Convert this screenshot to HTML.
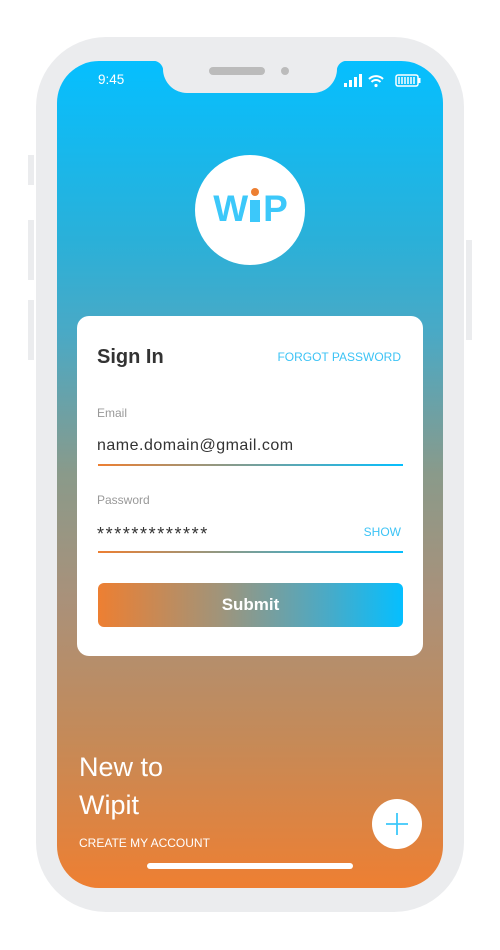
<!DOCTYPE html>
<html><head><meta charset="utf-8"><style>
*{margin:0;padding:0;box-sizing:border-box}
body{width:500px;height:950px;background:#fff;position:relative;overflow:hidden;font-family:"Liberation Sans",sans-serif}
.frame{position:absolute;left:36px;top:37px;width:428px;height:875px;background:#ebecee;border-radius:70px}
.btn{position:absolute;background:#ebecee}
.screen{position:absolute;left:57px;top:61px;width:386px;height:827px;border-radius:42px;overflow:hidden;
background:linear-gradient(180deg,#05bfff 0%,#2bb0d8 22%,#4aa9c5 33%,#8a9a8a 50%,#a9917a 65%,#c58a58 82%,#ee7f32 100%)}
.notch{position:absolute;left:106px;top:0;width:174px;height:32px;background:#ebecee;border-radius:0 0 24px 24px}
.notch:before,.notch:after{content:"";position:absolute;left:-10px;top:0;width:10px;height:10px;background:radial-gradient(circle at 0 100%,transparent 10px,#ebecee 10.5px)}
.notch:after{left:auto;right:-10px;background:radial-gradient(circle at 100% 100%,transparent 10px,#ebecee 10.5px)}
.card{position:absolute;left:20px;top:255px;width:346px;height:340px;background:#fff;border-radius:12px}
.t{position:absolute;white-space:nowrap}
.line{position:absolute;left:21px;width:305px;height:2px;background:linear-gradient(90deg,#ed7f32,#05bfff)}
</style></head><body>
<div class="btn" style="left:28px;top:155px;width:6px;height:30px"></div>
<div class="btn" style="left:28px;top:220px;width:6px;height:60px"></div>
<div class="btn" style="left:28px;top:300px;width:6px;height:60px"></div>
<div class="btn" style="left:466px;top:240px;width:6px;height:100px"></div>
<div class="frame"></div>
<div class="screen">
 <div class="notch"><div style="position:absolute;left:46px;top:6px;width:56px;height:8px;border-radius:4px;background:#bbb"></div><div style="position:absolute;left:118px;top:6px;width:8px;height:8px;border-radius:50%;background:#bbb"></div></div>
 <div class="t" style="left:41px;top:11px;color:#fff;font-size:13.5px">9:45</div>
 <svg style="position:absolute;left:287px;top:13px" width="80" height="14">
  <rect x="0" y="9" width="3" height="4" fill="#fff"/><rect x="5" y="6" width="3" height="7" fill="#fff"/><rect x="10" y="3" width="3" height="10" fill="#fff"/><rect x="15" y="0" width="3" height="13" fill="#fff"/>
  <path d="M25 5a10 10 0 0 1 14 0M27.5 8a6 6 0 0 1 9 0" stroke="#fff" stroke-width="2" fill="none"/><circle cx="32" cy="11.5" r="1.6" fill="#fff"/>
  <rect x="52" y="1" width="22" height="11" rx="2" stroke="#fff" stroke-width="1.5" fill="none"/><rect x="74.5" y="4" width="2" height="5" fill="#fff"/>
  <path d="M55 3v7M58 3v7M61 3v7M64 3v7M67 3v7M70 3v7" stroke="#fff" stroke-width="1.5"/>
 </svg>
 <div style="position:absolute;left:138px;top:94px;width:110px;height:110px;border-radius:50%;background:#fff"></div>
 <div class="t" style="left:151px;top:128px;width:84px;text-align:center;color:#3cc8fa;font-size:37px;font-weight:bold;letter-spacing:-1px;line-height:40px">W<span style="display:inline-block;width:10px;height:22px;background:#3cc8fa;margin:0 3px;vertical-align:-1px;position:relative"><span style="position:absolute;left:1px;top:-12px;width:8px;height:8px;border-radius:50%;background:#ed7f32"></span></span>P</div>
 <div class="card">
  <div class="t" style="left:20px;top:30px;font-size:20px;font-weight:bold;color:#333">Sign In</div>
  <div class="t" style="right:22px;top:34px;font-size:12px;color:#3cc3f5">FORGOT PASSWORD</div>
  <div class="t" style="left:20px;top:90px;font-size:12px;color:#999">Email</div>
  <div class="t" style="left:20px;top:121px;font-size:16px;color:#333;letter-spacing:0.5px">name.domain@gmail.com</div>
  <div class="line" style="top:148px"></div>
  <div class="t" style="left:20px;top:177px;font-size:12px;color:#999">Password</div>
  <div class="t" style="left:20px;top:208px;font-size:18px;color:#333;letter-spacing:1.6px">*************</div>
  <div class="t" style="right:22px;top:209px;font-size:12px;color:#3cc3f5">SHOW</div>
  <div class="line" style="top:235px"></div>
  <div style="position:absolute;left:21px;top:267px;width:305px;height:44px;border-radius:6px;background:linear-gradient(90deg,#ed7f32 0%,#a0947a 40%,#4aaac6 75%,#05bfff 100%);color:#fff;font-size:17px;font-weight:bold;text-align:center;line-height:44px">Submit</div>
 </div>
 <div class="t" style="left:22px;top:687px;color:#fff;font-size:27px;line-height:38px;font-weight:300">New to<br>Wipit</div>
 <div class="t" style="left:22px;top:775px;color:#fff;font-size:12px">CREATE MY ACCOUNT</div>
 <div style="position:absolute;left:315px;top:738px;width:50px;height:50px;border-radius:50%;background:#fff"></div>
 <svg style="position:absolute;left:327px;top:750px" width="26" height="26"><path d="M13 2v22M2 13h22" stroke="#3cc8fa" stroke-width="1.8"/></svg>
 <div style="position:absolute;left:90px;top:802px;width:206px;height:6px;border-radius:3px;background:#fff"></div>
</div>
</body></html>
